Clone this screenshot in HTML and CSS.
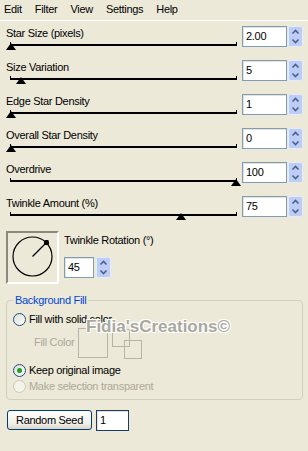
FILE: index.html
```html
<!DOCTYPE html>
<html lang="en">
<head>
    <meta charset="UTF-8">
    <title>Star Filter</title>
    <link rel="stylesheet" href="styles.css">
</head>
<body>
    <div class="menubar">
        <span>Edit</span>
        <span>Filter</span>
        <span>View</span>
        <span>Settings</span>
        <span>Help</span>
    </div>

    <div class="sliders">
        <div class="row">
            <div class="slider">
                <div class="label">Star Size (pixels)</div>
                <div class="track"><span class="thumb" style="left:0px"></span></div>
            </div>
            <div class="field">
                <div class="textbox">2.00</div>
                <svg class="spin" width="15" height="21" viewBox="0 0 15 21"><rect x="0.5" y="0.5" width="14" height="20" rx="2" fill="#bccdf8" stroke="#e4ebfc"/><path d="M4.5 7.5 L7.5 4.5 L10.5 7.5" fill="none" stroke="#4d6185" stroke-width="1.6"/><path d="M4.5 13.5 L7.5 16.5 L10.5 13.5" fill="none" stroke="#4d6185" stroke-width="1.6"/></svg>
            </div>
        </div>
        <div class="row">
            <div class="slider">
                <div class="label">Size Variation</div>
                <div class="track"><span class="thumb" style="left:10px"></span></div>
            </div>
            <div class="field">
                <div class="textbox">5</div>
                <svg class="spin" width="15" height="21" viewBox="0 0 15 21"><rect x="0.5" y="0.5" width="14" height="20" rx="2" fill="#bccdf8" stroke="#e4ebfc"/><path d="M4.5 7.5 L7.5 4.5 L10.5 7.5" fill="none" stroke="#4d6185" stroke-width="1.6"/><path d="M4.5 13.5 L7.5 16.5 L10.5 13.5" fill="none" stroke="#4d6185" stroke-width="1.6"/></svg>
            </div>
        </div>
        <div class="row">
            <div class="slider">
                <div class="label">Edge Star Density</div>
                <div class="track"><span class="thumb" style="left:0px"></span></div>
            </div>
            <div class="field">
                <div class="textbox">1</div>
                <svg class="spin" width="15" height="21" viewBox="0 0 15 21"><rect x="0.5" y="0.5" width="14" height="20" rx="2" fill="#bccdf8" stroke="#e4ebfc"/><path d="M4.5 7.5 L7.5 4.5 L10.5 7.5" fill="none" stroke="#4d6185" stroke-width="1.6"/><path d="M4.5 13.5 L7.5 16.5 L10.5 13.5" fill="none" stroke="#4d6185" stroke-width="1.6"/></svg>
            </div>
        </div>
        <div class="row">
            <div class="slider">
                <div class="label">Overall Star Density</div>
                <div class="track"><span class="thumb" style="left:0px"></span></div>
            </div>
            <div class="field">
                <div class="textbox">0</div>
                <svg class="spin" width="15" height="21" viewBox="0 0 15 21"><rect x="0.5" y="0.5" width="14" height="20" rx="2" fill="#bccdf8" stroke="#e4ebfc"/><path d="M4.5 7.5 L7.5 4.5 L10.5 7.5" fill="none" stroke="#4d6185" stroke-width="1.6"/><path d="M4.5 13.5 L7.5 16.5 L10.5 13.5" fill="none" stroke="#4d6185" stroke-width="1.6"/></svg>
            </div>
        </div>
        <div class="row">
            <div class="slider">
                <div class="label">Overdrive</div>
                <div class="track"><span class="thumb" style="left:225px"></span></div>
            </div>
            <div class="field">
                <div class="textbox">100</div>
                <svg class="spin" width="15" height="21" viewBox="0 0 15 21"><rect x="0.5" y="0.5" width="14" height="20" rx="2" fill="#bccdf8" stroke="#e4ebfc"/><path d="M4.5 7.5 L7.5 4.5 L10.5 7.5" fill="none" stroke="#4d6185" stroke-width="1.6"/><path d="M4.5 13.5 L7.5 16.5 L10.5 13.5" fill="none" stroke="#4d6185" stroke-width="1.6"/></svg>
            </div>
        </div>
        <div class="row">
            <div class="slider">
                <div class="label">Twinkle Amount (%)</div>
                <div class="track"><span class="thumb" style="left:170px"></span></div>
            </div>
            <div class="field">
                <div class="textbox">75</div>
                <svg class="spin" width="15" height="21" viewBox="0 0 15 21"><rect x="0.5" y="0.5" width="14" height="20" rx="2" fill="#bccdf8" stroke="#e4ebfc"/><path d="M4.5 7.5 L7.5 4.5 L10.5 7.5" fill="none" stroke="#4d6185" stroke-width="1.6"/><path d="M4.5 13.5 L7.5 16.5 L10.5 13.5" fill="none" stroke="#4d6185" stroke-width="1.6"/></svg>
            </div>
        </div>
    </div>

    <div class="dial-row">
        <div class="dial">
            <svg width="49" height="49" viewBox="0 0 49 49">
                <circle cx="24.5" cy="23.5" r="19.5" fill="none" stroke="#000" stroke-width="1.2"/>
                <line x1="24.5" y1="23.5" x2="38.5" y2="9.5" stroke="#000" stroke-width="1.2"/>
                <rect x="36" y="7" width="5" height="5" rx="1.5" fill="#000"/>
            </svg>
        </div>
        <div class="dial-side">
            <div class="label">Twinkle Rotation (°)</div>
            <div class="field">
                <div class="textbox small">45</div>
                <svg class="spin" width="15" height="21" viewBox="0 0 15 21"><rect x="0.5" y="0.5" width="14" height="20" rx="2" fill="#bccdf8" stroke="#e4ebfc"/><path d="M4.5 7.5 L7.5 4.5 L10.5 7.5" fill="none" stroke="#4d6185" stroke-width="1.6"/><path d="M4.5 13.5 L7.5 16.5 L10.5 13.5" fill="none" stroke="#4d6185" stroke-width="1.6"/></svg>
            </div>
        </div>
    </div>

    <fieldset class="group">
        <legend>Background Fill</legend>
        <div class="opt"><span class="radio"></span>Fill with solid color</div>
        <div class="fill">
            <span class="fill-label">Fill Color</span>
            <svg width="64" height="32" viewBox="0 0 64 32">
                <rect x="0.5" y="0.5" width="29" height="29" fill="none" stroke="#b6b4a8"/>
                <rect x="34.5" y="1.5" width="17" height="17" fill="none" stroke="#b6b4a8"/>
                <rect x="46.5" y="12.5" width="17" height="18" fill="none" stroke="#b6b4a8"/>
            </svg>
        </div>
        <div class="opt"><span class="radio checked"></span>Keep original image</div>
        <div class="opt disabled"><span class="radio"></span>Make selection transparent</div>
    </fieldset>

    <div class="watermark">Fidia'sCreations©</div>

    <div class="seed-row">
        <div class="button">Random Seed</div>
        <div class="textbox seed">1</div>
    </div>
</body>
</html>
```

FILE: styles.css
```css
* {
    margin: 0;
    padding: 0;
    box-sizing: border-box;
}

body {
    width: 308px;
    height: 451px;
    overflow: hidden;
    position: relative;
    background-color: #ece9d8;
    font-family: 'Liberation Sans', Arial, sans-serif;
    font-size: 11px;
    letter-spacing: -0.3px;
    color: #000;
}

.menubar {
    display: flex;
    gap: 13px;
    height: 21px;
    padding: 3px 0 0 4px;
    line-height: 13px;
    border-bottom: 1px solid #fff;
}

.sliders {
    padding-top: 5px;
}

.row {
    display: flex;
    height: 34px;
}

.slider {
    width: 242px;
    padding: 1px 0 0 6px;
}

.label {
    height: 13px;
    line-height: 13px;
    white-space: nowrap;
}

.track {
    position: relative;
    width: 227px;
    height: 4px;
    margin: 2px 0 0 4px;
    border-left: 1px solid #000;
    border-right: 1px solid #000;
    border-bottom: 2px solid #000;
}

.thumb {
    position: absolute;
    top: 1px;
    margin-left: -5px;
    width: 0;
    height: 0;
    border-left: 5px solid transparent;
    border-right: 5px solid transparent;
    border-bottom: 7px solid #000;
}

.field {
    display: flex;
    gap: 1px;
    height: 21px;
}

.textbox {
    width: 45px;
    height: 21px;
    padding-left: 3px;
    line-height: 19px;
    background: #fff;
    border: 1px solid #7f9db9;
    box-shadow: inset 1px 1px 0 #e6e3d6;
}

.textbox.small {
    width: 30px;
}

.spin {
    display: block;
}

.dial-row {
    display: flex;
    gap: 5px;
    padding: 1px 0 0 6px;
}

.dial {
    width: 53px;
    height: 53px;
    border: 2px solid;
    border-color: #8c8a80 #fff #fff #8c8a80;
}

.dial svg {
    display: block;
}

.dial-side {
    padding-top: 3px;
}

.dial-side .field {
    margin-top: 10px;
    gap: 2px;
}

.group {
    width: 297px;
    margin: 10px 0 0 6px;
    padding: 0 0 5px 6px;
    border: 1px solid #d0d0bf;
    border-radius: 4px;
}

.group legend {
    padding: 0 2px;
    line-height: 13px;
    color: #0046d5;
}

.opt {
    display: flex;
    align-items: center;
    gap: 3px;
    height: 16px;
}

.group legend + .opt {
    margin-top: 4px;
}

.opt.disabled {
    color: #aca899;
}

.radio {
    position: relative;
    width: 13px;
    height: 13px;
    border-radius: 50%;
    border: 1px solid #1c5180;
    background: linear-gradient(135deg, #dcdcd6, #fff);
}

.radio.checked::after {
    content: '';
    position: absolute;
    left: 3px;
    top: 3px;
    width: 5px;
    height: 5px;
    border-radius: 50%;
    background: #21a121;
}

.opt.disabled .radio {
    border-color: #cac8bb;
    background: #f5f4ea;
}

.fill {
    display: flex;
    height: 35px;
    padding-left: 21px;
}

.fill-label {
    width: 44px;
    margin-top: 9px;
    line-height: 13px;
    color: #aca899;
}

.fill svg {
    margin-top: 1px;
}

.watermark {
    position: absolute;
    left: 86px;
    top: 317px;
    font-size: 17px;
    font-weight: bold;
    line-height: 20px;
    letter-spacing: 0;
    color: #aaa89e;
    text-shadow: 1px 1px 0 #fff, -1px -1px 0 #fff, 1px -1px 0 #fff, -1px 1px 0 #fff;
}

.seed-row {
    display: flex;
    gap: 4px;
    margin-top: 10px;
    padding-left: 7px;
}

.button {
    width: 85px;
    height: 20px;
    line-height: 18px;
    text-align: center;
    border: 1px solid #003c74;
    border-radius: 3px;
    background: linear-gradient(#fff, #f0efe8 70%, #d8d5c8);
}

.textbox.seed {
    width: 33px;
    border-color: #1c3c64;
}
```
